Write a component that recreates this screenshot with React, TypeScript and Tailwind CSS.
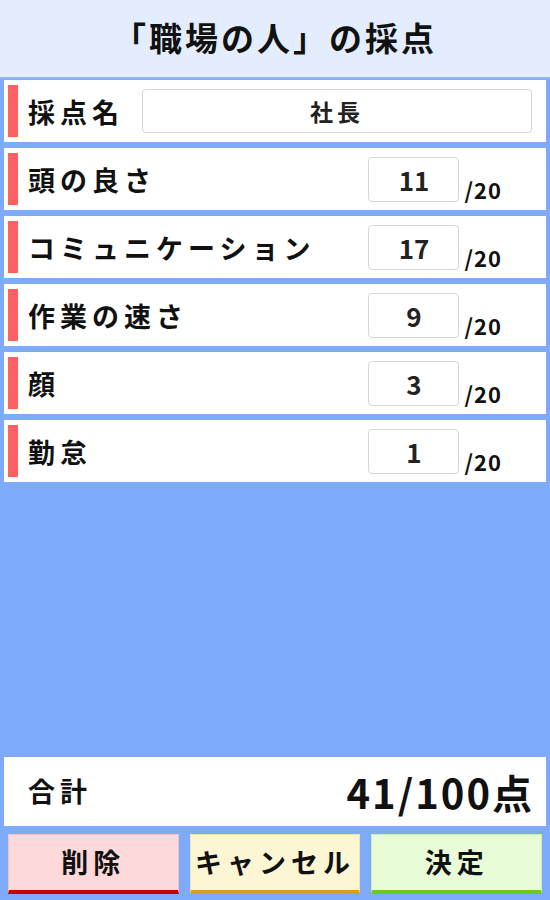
import React from 'react'

const FONT = '"Noto Sans CJK JP", "Noto Sans", sans-serif'

const items = [
  { label: '頭の良さ', score: 11 },
  { label: 'コミュニケーション', score: 17 },
  { label: '作業の速さ', score: 9 },
  { label: '顔', score: 3 },
  { label: '勤怠', score: 1 },
]

function Row({ children, label }: { children?: React.ReactNode; label: string }) {
  return (
    <div className="h-[62px] bg-white flex items-center">
      <div className="ml-[4px] w-[10px] h-[52px] bg-[#ff6060]" />
      <div className="ml-[10px] text-[27px] font-bold tracking-[5px] text-[#111] leading-none">{label}</div>
      {children}
    </div>
  )
}

export default function App() {
  const total = items.reduce((s, i) => s + i.score, 0)
  return (
    <div className="w-[550px] h-[900px] flex flex-col bg-[#7eaafb]" style={{ fontFamily: FONT }}>
      <div className="h-[79px] bg-[#e3edfd] flex items-center justify-center border-b-[2px] border-[#8fb5fb]">
        <h1 className="text-[33px] font-bold tracking-[3px] text-[#111] leading-none pb-[2px]">「職場の人」の採点</h1>
      </div>
      <div className="px-[4px] pt-[1px] flex flex-col gap-[6px]">
        <Row label="採点名">
          <div className="ml-[18px] mr-[14px] flex-1 h-[44px] rounded-[4px] border border-[#d6d6d6] flex items-center justify-center text-[23px] font-bold text-[#222] tracking-[4px]">
            社長
          </div>
        </Row>
        {items.map((it) => (
          <Row key={it.label} label={it.label}>
            <div className="ml-auto flex items-end">
              <div className="w-[91px] h-[45px] rounded-[4px] border border-[#d6d6d6] flex items-center justify-center pl-[2px] text-[26px] font-bold text-[#222]">
                {it.score}
              </div>
              <div className="ml-[6px] mr-[44px] text-[22px] font-bold tracking-[1px] text-[#111] leading-none mb-[2px]">/20</div>
            </div>
          </Row>
        ))}
      </div>
      <div className="flex-1" />
      <div className="mx-[4px] h-[69px] bg-white flex items-center justify-between pl-[24px] pr-[12px]">
        <div className="text-[27px] font-bold tracking-[5px] text-[#111]">合計</div>
        <div className="text-[40px] font-bold tracking-[2px] text-[#111] leading-none">{total}/100点</div>
      </div>
      <div className="mt-[8px] mb-[6px] px-[8px] flex gap-[11px] h-[60px]">
        <button className="flex-1 bg-[#fdd9da] border border-[#f3c3c3] border-b-[4px] border-b-[#c80000] text-[27px] font-bold tracking-[5px] text-[#111]">削除</button>
        <button className="flex-1 bg-[#fdf6d4] border border-[#efe3b0] border-b-[4px] border-b-[#d3a21a] text-[27px] font-bold tracking-[5px] text-[#111]">キャンセル</button>
        <button className="flex-1 bg-[#e8fcd8] border border-[#cfeebb] border-b-[4px] border-b-[#6bc82a] text-[27px] font-bold tracking-[5px] text-[#111]">決定</button>
      </div>
    </div>
  )
}
